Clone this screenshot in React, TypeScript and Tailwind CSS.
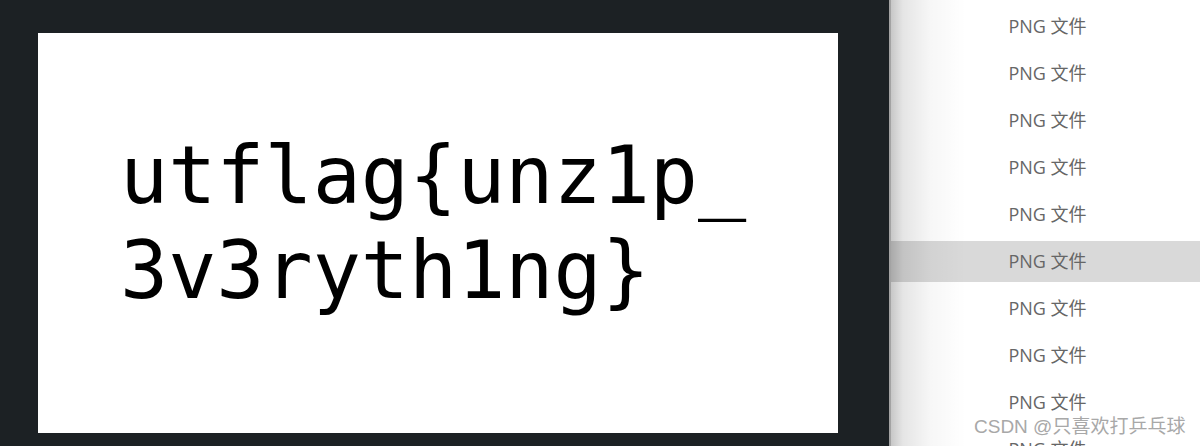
import React from "react";

export default function App() {
  const rows = Array.from({ length: 10 }, (_, i) => i);
  return (
    <div className="relative flex h-[446px] w-[1200px] overflow-hidden bg-[#1c2124]">
      <div className="flex w-[889px] shrink-0 items-start pl-[38px] pt-[33px]">
        <div className="h-[400px] w-[800px] bg-white pl-[82px] pt-[95px]">
          <div
            className="text-[80px] leading-[95px] text-black"
            style={{ fontFamily: '"DejaVu Sans Mono", monospace' }}
          >
            <div>utflag{"{"}unz1p_</div>
            <div>3v3ryth1ng{"}"}</div>
          </div>
        </div>
      </div>
      <div className="relative flex-1 border-l-2 border-[#a3a3a3] bg-white">
        <div className="flex flex-col gap-[6px] pt-[6px]">
          {rows.map((i) => (
            <div
              key={i}
              className={`flex h-[41px] shrink-0 items-center justify-center pl-[4px] text-[18px] text-[#666666] ${
                i === 5 ? "bg-[#d9d9d9]" : ""
              }`}
              style={{ fontFamily: '"Open Sans", "Noto Sans CJK SC", sans-serif' }}
            >
              PNG 文件
            </div>
          ))}
        </div>
        <div className="pointer-events-none absolute inset-0 bg-[linear-gradient(to_right,rgba(0,0,0,0.22),rgba(0,0,0,0.1)_12px,rgba(0,0,0,0.03)_40px,rgba(0,0,0,0)_75px)]" />
      </div>
      <div
        className="pointer-events-none absolute left-[974px] top-[414px] text-[19px] leading-[26px] text-[#a8a8a8] [text-shadow:0_0_1px_#ffffff]"
        style={{ fontFamily: '"Liberation Sans", "Noto Sans CJK SC", sans-serif' }}
      >
        CSDN @只喜欢打乒乓球
      </div>
    </div>
  );
}
